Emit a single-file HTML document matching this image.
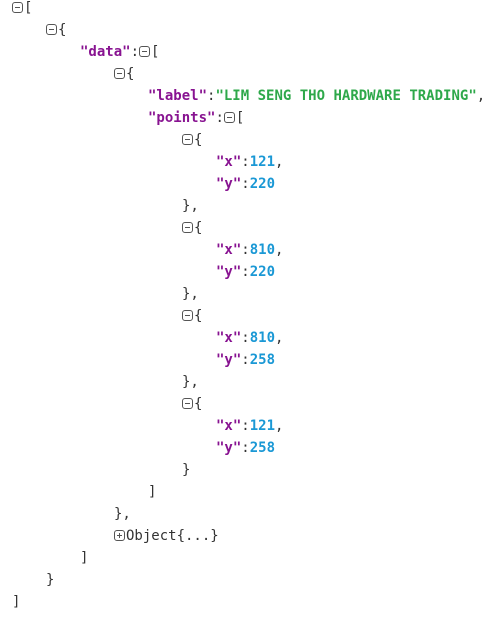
<!DOCTYPE html>
<html><head><style>
body{margin:0;background:#fff;width:502px;height:626px;overflow:hidden;font-family:"DejaVu Sans Mono","Liberation Mono",monospace;font-size:14px;color:#333}
.l{position:absolute;height:22px;line-height:22px;white-space:pre}
.k{color:#881391;font-weight:bold}
.n{color:#1a98d5;font-weight:bold}
.s{color:#2ea84a;font-weight:bold}
.i{display:inline-block;width:9px;height:9px;border:1px solid #555;border-radius:3px;position:relative;vertical-align:-1px;margin-right:1px}
.i:before{content:"";position:absolute;left:2px;right:2px;top:4px;height:1px;background:#555}
.p:after{content:"";position:absolute;top:2px;bottom:2px;left:4px;width:1px;background:#555}
</style></head><body>
<div class="l" style="top:-3px;left:12px"><span class="i"></span>[</div>
<div class="l" style="top:19px;left:46px"><span class="i"></span>{</div>
<div class="l" style="top:41px;left:80px"><span class="k">"data"</span>:<span class="i"></span>[</div>
<div class="l" style="top:63px;left:114px"><span class="i"></span>{</div>
<div class="l" style="top:85px;left:148px"><span class="k">"label"</span>:<span class="s">"LIM SENG THO HARDWARE TRADING"</span>,</div>
<div class="l" style="top:107px;left:148px"><span class="k">"points"</span>:<span class="i"></span>[</div>
<div class="l" style="top:129px;left:182px"><span class="i"></span>{</div>
<div class="l" style="top:151px;left:216px"><span class="k">"x"</span>:<span class="n">121</span>,</div>
<div class="l" style="top:173px;left:216px"><span class="k">"y"</span>:<span class="n">220</span></div>
<div class="l" style="top:195px;left:182px">},</div>
<div class="l" style="top:217px;left:182px"><span class="i"></span>{</div>
<div class="l" style="top:239px;left:216px"><span class="k">"x"</span>:<span class="n">810</span>,</div>
<div class="l" style="top:261px;left:216px"><span class="k">"y"</span>:<span class="n">220</span></div>
<div class="l" style="top:283px;left:182px">},</div>
<div class="l" style="top:305px;left:182px"><span class="i"></span>{</div>
<div class="l" style="top:327px;left:216px"><span class="k">"x"</span>:<span class="n">810</span>,</div>
<div class="l" style="top:349px;left:216px"><span class="k">"y"</span>:<span class="n">258</span></div>
<div class="l" style="top:371px;left:182px">},</div>
<div class="l" style="top:393px;left:182px"><span class="i"></span>{</div>
<div class="l" style="top:415px;left:216px"><span class="k">"x"</span>:<span class="n">121</span>,</div>
<div class="l" style="top:437px;left:216px"><span class="k">"y"</span>:<span class="n">258</span></div>
<div class="l" style="top:459px;left:182px">}</div>
<div class="l" style="top:481px;left:148px">]</div>
<div class="l" style="top:503px;left:114px">},</div>
<div class="l" style="top:525px;left:114px"><span class="i p"></span>Object{...}</div>
<div class="l" style="top:547px;left:80px">]</div>
<div class="l" style="top:569px;left:46px">}</div>
<div class="l" style="top:591px;left:12px">]</div>
</body></html>
